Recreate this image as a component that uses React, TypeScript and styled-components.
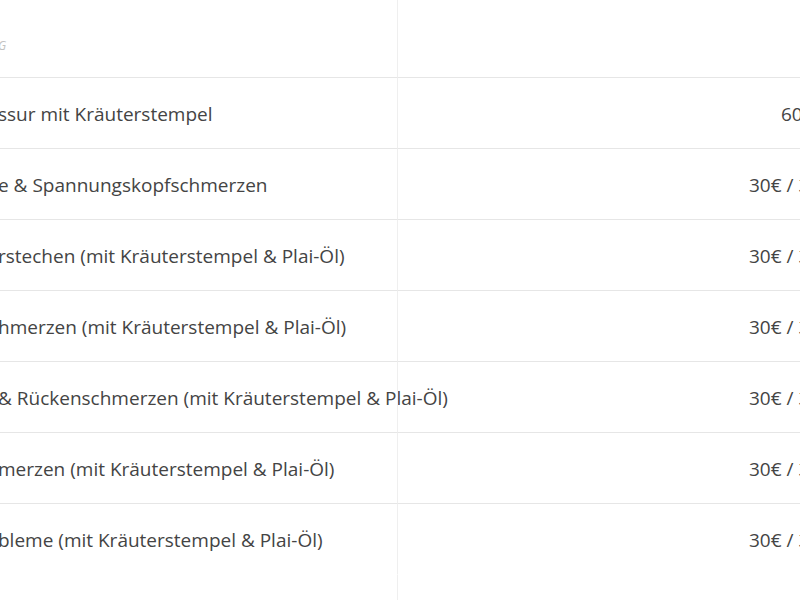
import React from "react";
import styled, { createGlobalStyle } from "styled-components";

const Global = createGlobalStyle`
  html, body { margin: 0; padding: 0; background: #fff; overflow: hidden; }
  body { font-family: "Open Sans", "Noto Sans", sans-serif; }
`;

const Page = styled.div`
  width: 800px;
  height: 600px;
  overflow: hidden;
`;

const Table = styled.div`
  display: grid;
  grid-template-columns: 399px 520px;
  margin-left: -2px;
  width: 919px;
`;

const HeadCell = styled.div<{ $right?: boolean }>`
  height: 78px;
  box-sizing: border-box;
  display: flex;
  align-items: center;
  padding-top: 14px;
  border-bottom: 1px solid #e6e6e6;
  ${(p) => (p.$right ? "border-left: 1px solid #efefef;" : "")}
  font-style: italic;
  font-size: 12px;
  color: #c2c2c2;
`;

const DescCell = styled.div<{ $last?: boolean }>`
  height: 71px;
  box-sizing: border-box;
  display: flex;
  align-items: center;
  white-space: nowrap;
  border-bottom: 1px solid ${(p) => (p.$last ? "transparent" : "#e6e6e6")};
  font-size: 19px;
  color: #444;
  padding-top: 1px;
`;

const PriceCell = styled.div<{ $indent: number; $last?: boolean }>`
  height: 71px;
  box-sizing: border-box;
  display: flex;
  align-items: center;
  white-space: nowrap;
  border-bottom: 1px solid ${(p) => (p.$last ? "transparent" : "#e6e6e6")};
  border-left: 1px solid #efefef;
  padding-left: ${(p) => p.$indent}px;
  font-size: 19px;
  color: #444;
  padding-top: 1px;
`;

const FillCell = styled.div<{ $right?: boolean }>`
  height: 100px;
  ${(p) => (p.$right ? "border-left: 1px solid #efefef;" : "")}
`;

const rows = [
  { d: "ssur mit Kräuterstempel", p: "60€ / 60 Min.", i: 383 },
  { d: "e & Spannungskopfschmerzen", p: "30€ / 30 Min.", i: 351 },
  { d: "rstechen (mit Kräuterstempel & Plai-Öl)", p: "30€ / 30 Min.", i: 351 },
  { d: "hmerzen (mit Kräuterstempel & Plai-Öl)", p: "30€ / 30 Min.", i: 351 },
  { d: "& Rückenschmerzen (mit Kräuterstempel & Plai-Öl)", p: "30€ / 30 Min.", i: 351 },
  { d: "merzen (mit Kräuterstempel & Plai-Öl)", p: "30€ / 30 Min.", i: 351 },
  { d: "bleme (mit Kräuterstempel & Plai-Öl)", p: "30€ / 30 Min.", i: 351 },
];

export default function App() {
  return (
    <Page>
      <Global />
      <Table>
        <HeadCell>G</HeadCell>
        <HeadCell $right />
        {rows.map((r, k) => (
          <React.Fragment key={k}>
            <DescCell $last={k === rows.length - 1}>{r.d}</DescCell>
            <PriceCell $indent={r.i} $last={k === rows.length - 1}>
              {r.p}
            </PriceCell>
          </React.Fragment>
        ))}
        <FillCell />
        <FillCell $right />
      </Table>
    </Page>
  );
}
